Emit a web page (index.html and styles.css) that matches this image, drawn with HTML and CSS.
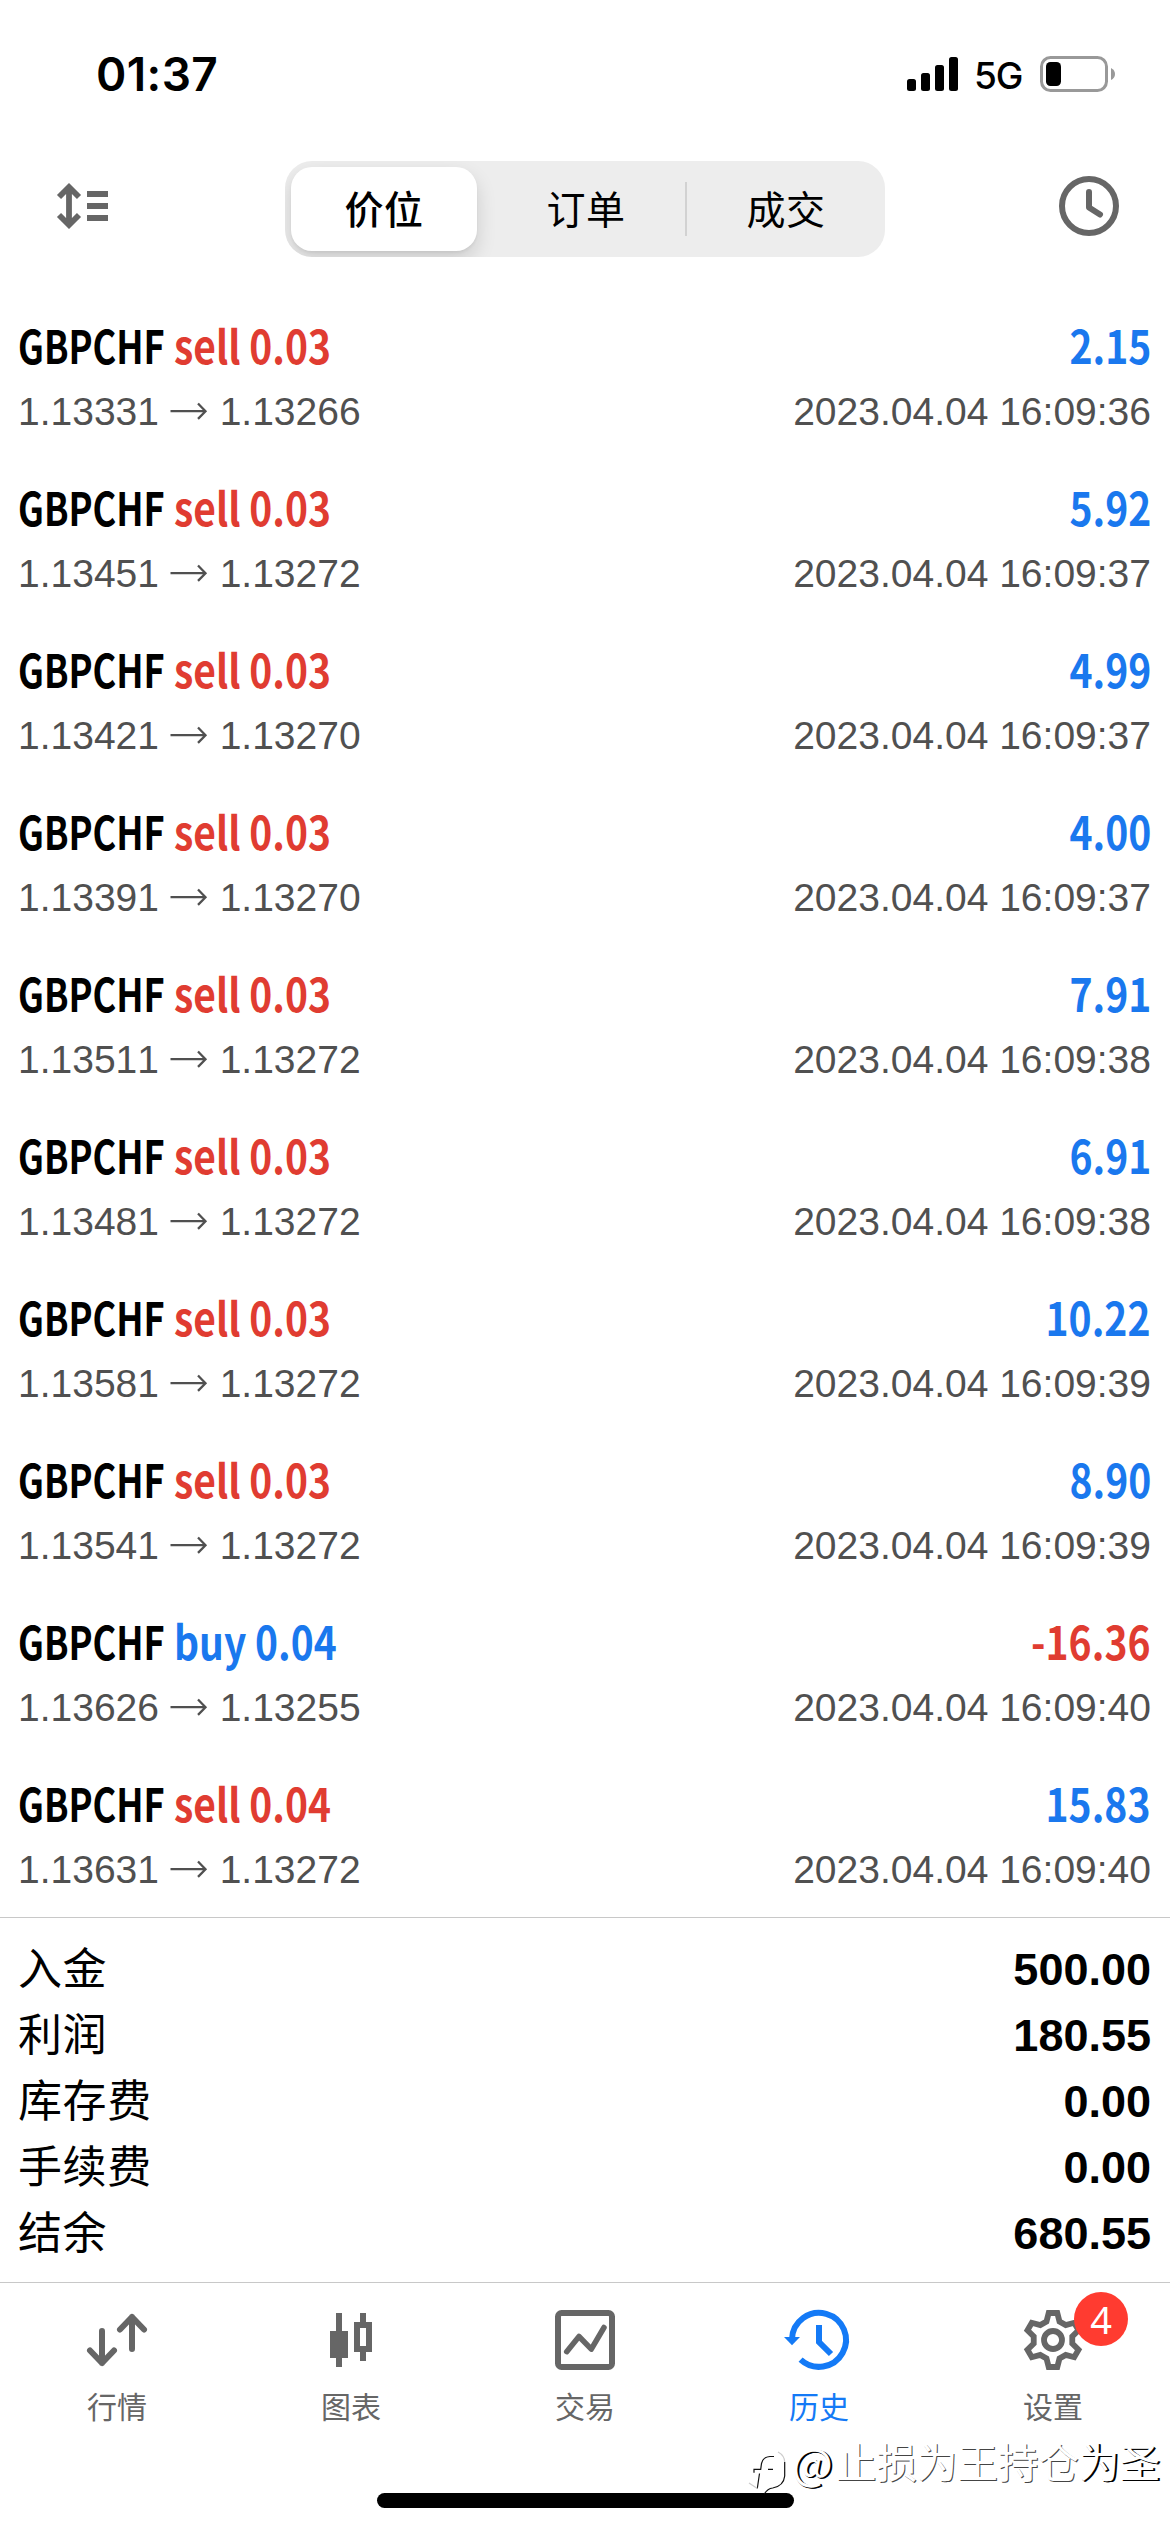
FILE: index.html
```html
<!DOCTYPE html>
<html lang="zh-CN">
<head>
<meta charset="utf-8">
<title>历史</title>
<link rel="stylesheet" href="styles.css">
</head>
<body>
<div class="screen">
  <div class="status">
    <div class="time">01:37</div>
    <div class="indicators">
      <svg class="signal" width="51" height="34" viewBox="0 0 51 34"><rect x="0" y="22" width="9" height="12" rx="2.5"/><rect x="14" y="16" width="9" height="18" rx="2.5"/><rect x="28" y="8" width="9" height="26" rx="2.5"/><rect x="42" y="0" width="9" height="34" rx="2.5"/></svg>
      <span class="network">5G</span>
      <svg class="battery" width="76" height="36" viewBox="0 0 76 36"><rect x="1.5" y="1.5" width="65" height="33" rx="9" fill="none" stroke="#999" stroke-width="3"/><rect x="6" y="6" width="15" height="24" rx="4.5"/><path d="M71 12q4 2 4 6t-4 6z" fill="#999"/></svg>
    </div>
  </div>

  <header class="toolbar">
    <svg class="sort" width="52" height="48" viewBox="0 0 52 48"><path d="M13 6v36M3 15 13 5l10 10M3 33l10 10 10-10" fill="none" stroke="#666" stroke-width="5.8"/><path d="M31 9h21v6H31zM31 21h21v6H31zM31 33h21v6H31z" fill="#666"/></svg>
    <nav class="segments">
      <span class="segment selected">价位</span>
      <span class="segment">订单</span>
      <span class="segment divided">成交</span>
    </nav>
    <svg class="clock" width="60" height="60" viewBox="0 0 60 60" fill="none" stroke="#666" stroke-width="6" stroke-linecap="round" stroke-linejoin="round"><circle cx="30" cy="30" r="27"/><path d="M30 16v15.500l11 7"/></svg>
  </header>

  <svg class="defs" width="0" height="0"><symbol id="arrow" viewBox="0 0 39 20"><path d="M.5 10.200h34M28 2.500l7.500 7.700L28 17.900" fill="none" stroke="#505050" stroke-width="2.300"/></symbol></svg>

  <main class="deals">
    <div class="deal"><div class="line"><div class="title"><span class="symbol">GBPCHF</span> <span class="side sell">sell 0.03</span></div><div class="profit">2.15</div></div><div class="line details"><div class="prices">1.13331 <svg><use href="#arrow"/></svg> 1.13266</div><div>2023.04.04 16:09:36</div></div></div>
    <div class="deal"><div class="line"><div class="title"><span class="symbol">GBPCHF</span> <span class="side sell">sell 0.03</span></div><div class="profit">5.92</div></div><div class="line details"><div class="prices">1.13451 <svg><use href="#arrow"/></svg> 1.13272</div><div>2023.04.04 16:09:37</div></div></div>
    <div class="deal"><div class="line"><div class="title"><span class="symbol">GBPCHF</span> <span class="side sell">sell 0.03</span></div><div class="profit">4.99</div></div><div class="line details"><div class="prices">1.13421 <svg><use href="#arrow"/></svg> 1.13270</div><div>2023.04.04 16:09:37</div></div></div>
    <div class="deal"><div class="line"><div class="title"><span class="symbol">GBPCHF</span> <span class="side sell">sell 0.03</span></div><div class="profit">4.00</div></div><div class="line details"><div class="prices">1.13391 <svg><use href="#arrow"/></svg> 1.13270</div><div>2023.04.04 16:09:37</div></div></div>
    <div class="deal"><div class="line"><div class="title"><span class="symbol">GBPCHF</span> <span class="side sell">sell 0.03</span></div><div class="profit">7.91</div></div><div class="line details"><div class="prices">1.13511 <svg><use href="#arrow"/></svg> 1.13272</div><div>2023.04.04 16:09:38</div></div></div>
    <div class="deal"><div class="line"><div class="title"><span class="symbol">GBPCHF</span> <span class="side sell">sell 0.03</span></div><div class="profit">6.91</div></div><div class="line details"><div class="prices">1.13481 <svg><use href="#arrow"/></svg> 1.13272</div><div>2023.04.04 16:09:38</div></div></div>
    <div class="deal"><div class="line"><div class="title"><span class="symbol">GBPCHF</span> <span class="side sell">sell 0.03</span></div><div class="profit">10.22</div></div><div class="line details"><div class="prices">1.13581 <svg><use href="#arrow"/></svg> 1.13272</div><div>2023.04.04 16:09:39</div></div></div>
    <div class="deal"><div class="line"><div class="title"><span class="symbol">GBPCHF</span> <span class="side sell">sell 0.03</span></div><div class="profit">8.90</div></div><div class="line details"><div class="prices">1.13541 <svg><use href="#arrow"/></svg> 1.13272</div><div>2023.04.04 16:09:39</div></div></div>
    <div class="deal"><div class="line"><div class="title"><span class="symbol">GBPCHF</span> <span class="side buy">buy 0.04</span></div><div class="profit loss">-16.36</div></div><div class="line details"><div class="prices">1.13626 <svg><use href="#arrow"/></svg> 1.13255</div><div>2023.04.04 16:09:40</div></div></div>
    <div class="deal"><div class="line"><div class="title"><span class="symbol">GBPCHF</span> <span class="side sell">sell 0.04</span></div><div class="profit">15.83</div></div><div class="line details"><div class="prices">1.13631 <svg><use href="#arrow"/></svg> 1.13272</div><div>2023.04.04 16:09:40</div></div></div>
  </main>

  <section class="summary">
    <div class="total"><span>入金</span><b>500.00</b></div>
    <div class="total"><span>利润</span><b>180.55</b></div>
    <div class="total"><span>库存费</span><b>0.00</b></div>
    <div class="total"><span>手续费</span><b>0.00</b></div>
    <div class="total"><span>结余</span><b>680.55</b></div>
  </section>

  <footer class="tabs">
    <div class="tab">
      <svg class="icon" viewBox="0 0 60 60" fill="none" stroke="#666" stroke-width="6" stroke-linecap="round" stroke-linejoin="round"><path d="M15 21v32M3 40.500 15 53l12-12.500M45 39V7M33 19.500 45 7l12 12.500"/></svg>
      <span>行情</span>
    </div>
    <div class="tab">
      <svg class="icon" viewBox="0 0 60 60" fill="#666"><path d="M15 3h6v18h6v27h-6v9h-6v-9H9V21h6zM39 3h6v9h6v30h-6v9h-6v-9h-6V12h6zM39 18v18h6V18z" fill-rule="evenodd"/></svg>
      <span>图表</span>
    </div>
    <div class="tab">
      <svg class="icon" viewBox="0 0 60 60" fill="none" stroke="#666" stroke-width="6"><rect x="3" y="3" width="54" height="54" rx="3.500"/><path d="M11.700 41.700 24 26.500l12.300 12.700L49 17.500" stroke-width="5.500" stroke-linecap="round" stroke-linejoin="round"/></svg>
      <span>交易</span>
    </div>
    <div class="tab active">
      <svg class="icon" viewBox="0 0 60 60" fill="none" stroke="#147af6" stroke-width="6"><path d="M3 29a27 27 0 1 1 8.600 20.600M30 15v17l12 12"/><path d="M-5 27H11L3 35.200z" fill="#147af6" stroke="none"/></svg>
      <span>历史</span>
    </div>
    <div class="tab">
      <div class="badged">
        <svg class="icon" viewBox="-30 -30 60 60" fill="none" stroke="#666" stroke-width="5.800"><path d="M-4.300-27H4.300L6.500-18.500 12.770-14.880 21.230-17.220 25.530-9.780 19.270-3.620V3.620L25.530 9.780 21.230 17.220 12.770 14.880 6.500 18.500 4.300 27H-4.300L-6.500 18.500-12.770 14.880-21.230 17.220-25.530 9.780-19.270 3.620V-3.620L-25.530-9.780-21.230-17.220-12.770-14.880-6.500-18.500z"/><circle r="9"/></svg>
        <span class="badge">4</span>
      </div>
      <span>设置</span>
    </div>
  </footer>
  <div class="home"></div>

  <div class="watermark">
    <svg width="44" height="48" viewBox="0 0 44 48" fill="none" stroke="#111" stroke-width="1.200"><path d="M26 9.500h-4q-7 .5-8.500 7l-.8 5.800H6v3.400M20 22.300h5M11.500 26.500 9.300 41.500"/><path d="M9.300 41.500 1 36M30 5q6.500 3.500 6.700 10" stroke="#ccc"/><path d="M36.700 15v14q-1 10-12 12-5 .5-8.500 6"/></svg>
    <em>@</em><span>止损为王持仓<i>为圣</i></span>
  </div>
</div>
</body>
</html>
```
FILE: styles.css
```css
* {
  box-sizing: border-box;
}

body {
  margin: 0;
  background: #fff;
  color: #000;
  font-family: "Liberation Sans", "Noto Sans CJK SC", sans-serif;
}

.screen {
  position: relative;
  width: 1170px;
  height: 2532px;
  overflow: hidden;
  display: flex;
  flex-direction: column;
  background: #fff;
}

.status {
  height: 148px;
  padding: 0 54px 0 96px;
  display: flex;
  align-items: center;
  justify-content: space-between;
  font-family: Inter, sans-serif;
}

.time {
  font-size: 46px;
  font-weight: 600;
  letter-spacing: 0.4px;
  line-height: 60px;
}

.indicators {
  display: flex;
  align-items: center;
}

.network {
  margin: 3px 17px 0 16px;
  width: 49px;
  font-size: 37px;
  font-weight: 500;
  letter-spacing: -1px;
  line-height: 44px;
  white-space: nowrap;
}

.toolbar {
  height: 135px;
  padding: 13px 51px 0 56px;
  display: flex;
  align-items: flex-start;
}

.sort {
  margin-top: 21px;
}

.segments {
  width: 600px;
  height: 96px;
  margin: 0 auto 0 177px;
  display: grid;
  grid-template-columns: 200px 200px 200px;
  border-radius: 27px;
  background: #ededed;
  overflow: hidden;
  font-family: "Noto Sans CJK SC", sans-serif;
  font-size: 39px;
  letter-spacing: 0.5px;
}

.segment {
  display: flex;
  align-items: center;
  justify-content: center;
  padding: 0 0 4px 2px;
}

.segment.selected {
  margin: 6px 8px 6px 6px;
  padding-left: 0;
  border-radius: 21px;
  background: #fff;
  font-weight: 500;
  box-shadow: 0 9px 20px rgba(0, 0, 0, 0.14), 0 2px 3px rgba(0, 0, 0, 0.05);
}

.segment.divided {
  background: linear-gradient(#d2d2d2, #d2d2d2) left center / 2px 54px no-repeat;
}

.clock {
  margin-top: 15px;
}

.defs {
  position: absolute;
}

.deals {
  height: 1634px;
}

.deal {
  height: 162px;
  padding: 31px 19px 9px 18px;
  display: flex;
  flex-direction: column;
  gap: 14px;
}

.line {
  display: flex;
  justify-content: space-between;
}

.title,
.profit {
  font-family: "Noto Sans CJK SC", sans-serif;
  font-size: 46px;
  font-weight: 700;
  line-height: 60px;
  white-space: nowrap;
}

.title {
  display: flex;
}

.symbol {
  width: 156px;
  transform: scaleX(0.785);
  transform-origin: left;
}

.side {
  transform: scaleX(0.847);
  transform-origin: left;
}

.profit {
  transform: scaleX(0.85);
  transform-origin: right;
  color: #1a78ee;
}

.sell,
.profit.loss {
  color: #e03c31;
}

.buy {
  color: #1a78ee;
}

.details {
  color: #505050;
  font-size: 39px;
  line-height: 48px;
  font-kerning: none;
}

.prices svg {
  width: 39px;
  height: 20px;
  vertical-align: 4px;
}

.summary {
  height: 365px;
  padding: 18px 19px 0 18px;
  border-top: 1px solid #c8c8c8;
}

.total {
  height: 66px;
  display: flex;
  justify-content: space-between;
  line-height: 60px;
  font-size: 45px;
}

.total span {
  font-family: "Noto Sans CJK SC", sans-serif;
  font-size: 44px;
  letter-spacing: 0.6px;
}

.total b {
  padding-top: 4px;
}

.tabs {
  height: 211px;
  padding-top: 27px;
  border-top: 1px solid #c8c8c8;
  display: grid;
  grid-template-columns: repeat(5, 1fr);
}

.tab {
  display: flex;
  flex-direction: column;
  align-items: center;
  gap: 15px;
  color: #666;
  font-family: "Noto Sans CJK SC", sans-serif;
  font-size: 30px;
  line-height: 40px;
}

.tab.active {
  color: #147af6;
}

.icon {
  display: block;
  width: 60px;
  height: 60px;
  overflow: visible;
}

.badged {
  position: relative;
}

.badge {
  position: absolute;
  left: 51px;
  top: -18px;
  width: 54px;
  height: 54px;
  border-radius: 50%;
  background: #ff3b30;
  color: #fff;
  font: 38px/54px "Noto Sans", sans-serif;
  text-align: center;
}

.home {
  width: 417px;
  height: 15px;
  margin: 0 auto;
  border-radius: 8px;
  background: #000;
}

.watermark {
  position: absolute;
  right: 10px;
  top: 2427px;
  display: flex;
  align-items: center;
  color: #fff;
  font-family: "Noto Sans CJK SC", sans-serif;
  font-size: 40.5px;
  line-height: 50px;
  white-space: nowrap;
  text-shadow: 1px 1px 0 #444;
}

.watermark svg {
  margin-top: 20px;
}

.watermark em {
  width: 44px;
  font-style: normal;
  font-size: 43px;
  text-shadow: 1px 1px 0 #000, 2px 1px 0 #000;
}

.watermark i {
  font-style: normal;
  text-shadow: 1px 1px 0 #000, 2px 1px 0 #000;
}
```
